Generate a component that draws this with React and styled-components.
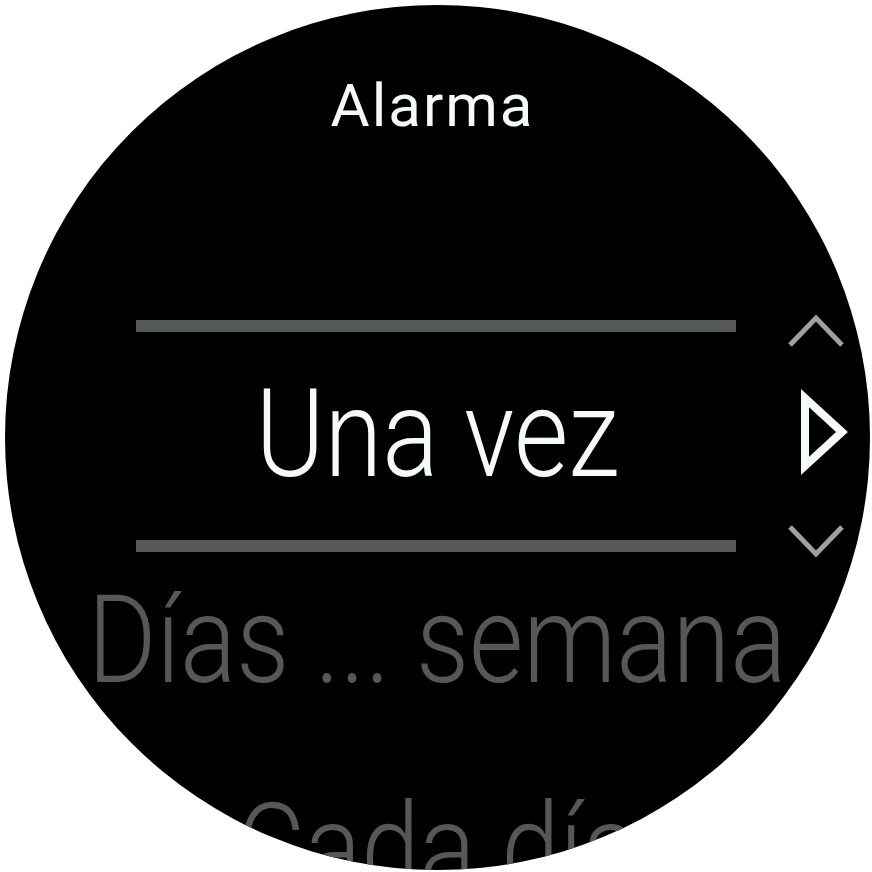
import React from "react";
import styled, { createGlobalStyle } from "styled-components";

const Global = createGlobalStyle`
  html, body { margin: 0; padding: 0; background: #ffffff; }
  body { font-family: Roboto, "Liberation Sans", sans-serif; }
`;

const Watch = styled.div`
  position: relative;
  width: 865px;
  height: 865px;
  margin: 5px;
  border-radius: 50%;
  background: #000;
  overflow: hidden;
  display: flex;
  flex-direction: column;
  align-items: center;
`;

const Title = styled.div`
  margin-top: 71px;
  margin-right: 10px;
  height: 60px;
  font-size: 60px;
  line-height: 60px;
  letter-spacing: 2px;
  color: #f4fbf4;
  white-space: nowrap;
`;

const Divider = styled.div`
  flex: none;
  width: 600px;
  height: 12px;
  margin-top: ${(p) => p.$top}px;
  margin-right: 4px;
  background: #555955;
`;

const Option = styled.div`
  flex: none;
  height: 122px;
  margin-top: ${(p) => p.$top}px;
  font-size: 122px;
  line-height: 122px;
  font-weight: 300;
  color: ${(p) => (p.$active ? "#f4fbf4" : "#555955")};
  white-space: nowrap;
  transform: scaleX(0.86);
`;

const Indicator = styled.div`
  position: absolute;
  left: 780px;
  top: 302px;
  width: 70px;
  height: 260px;
  display: flex;
  flex-direction: column;
`;

const Icon = styled.svg`
  display: block;
  flex: none;
  margin-top: ${(p) => p.$top || 0}px;
`;

export default function App() {
  return (
    <>
      <Global />
      <Watch>
        <Title>Alarma</Title>
        <Divider $top={184} />
        <Option $top={42} $active>Una vez</Option>
        <Divider $top={44} />
        <Option $top={28}>Días ... semana</Option>
        <Option $top={86}>Cada día</Option>
        <Indicator>
          <Icon width="70" height="40" viewBox="0 0 70 40">
            <path d="M5 38 L31 11 L57 38" fill="none" stroke="#9ca39c" strokeWidth="5" />
          </Icon>
          <Icon width="70" height="90" viewBox="0 0 70 90" $top={40}>
            <path d="M20 11 L20 79 L57 45 Z" fill="none" stroke="#f4fbf4" strokeWidth="8" strokeLinejoin="miter" />
          </Icon>
          <Icon width="70" height="40" viewBox="0 0 70 40" $top={48}>
            <path d="M5 2 L31 29 L57 2" fill="none" stroke="#9ca39c" strokeWidth="5" />
          </Icon>
        </Indicator>
      </Watch>
    </>
  );
}
